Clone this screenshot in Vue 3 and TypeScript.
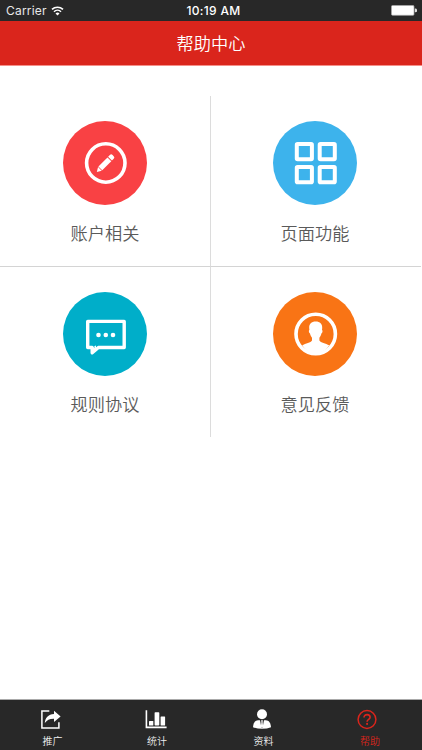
<script setup lang="ts">
interface Entry {
  id: string
  label: string
}

const topics: Entry[] = [
  { id: 'account', label: '账户相关' },
  { id: 'features', label: '页面功能' },
  { id: 'rules', label: '规则协议' },
  { id: 'feedback', label: '意见反馈' },
]

const tabs: Entry[] = [
  { id: 'promote', label: '推广' },
  { id: 'stats', label: '统计' },
  { id: 'profile', label: '资料' },
  { id: 'help', label: '帮助' },
]

const activeTab = 'help'
</script>

<template>
  <div class="screen">
    <div class="status">
      <div class="carrier">
        <span>Carrier</span>
        <svg class="wifi" width="13" height="10" viewBox="0 0 13 10">
          <path d="M1 3.4a8 8 0 0 1 11 0M3 5.7a5 5 0 0 1 7 0" fill="none" stroke="#fff" stroke-width="1.6" />
          <path d="M4.5 7.4a3 3 0 0 1 4 0L6.5 9.6z" fill="#fff" />
        </svg>
      </div>
      <div class="time">10:19 AM</div>
      <div class="power">
        <svg width="26" height="11" viewBox="0 0 26 11">
          <rect x="0.5" y="0.5" width="22.5" height="9.8" rx="1" fill="#fff" stroke="#aaa" stroke-width="0.7" />
          <path d="M23.8 3.6h.6a1.2 1.2 0 0 1 0 3.6h-.6z" fill="#ddd" />
        </svg>
      </div>
    </div>
    <header class="header">帮助中心</header>

    <main class="grid">
      <div v-for="topic in topics" :key="topic.id" class="cell">
        <div class="disc" :class="topic.id">
          <svg v-if="topic.id === 'account'" width="84" height="84" viewBox="0 0 84 84">
            <circle cx="42.8" cy="42" r="19.2" fill="none" stroke="#fff" stroke-width="3.6" />
            <g transform="translate(33.8 50.9) rotate(-45)" fill="#fff">
              <path d="M0 0L4.4-2.6V2.6z" />
              <path d="M5-2.7H17.8V2.7H5z" />
              <path d="M18.7-2.7H21.2Q23.1-2.7 23.1-.8V.8Q23.1 2.7 21.2 2.7H18.7z" />
            </g>
          </svg>
          <svg v-else-if="topic.id === 'features'" width="84" height="84" viewBox="0 0 84 84">
            <g fill="none" stroke="#fff" stroke-width="4">
              <rect x="23.8" y="23.1" width="15.1" height="15.2" rx="0.8" />
              <rect x="46.7" y="23.1" width="15.1" height="15.2" rx="0.8" />
              <rect x="23.8" y="46" width="15.1" height="15.2" rx="0.8" />
              <rect x="46.7" y="46" width="15.1" height="15.2" rx="0.8" />
            </g>
          </svg>
          <svg v-else-if="topic.id === 'rules'" width="84" height="84" viewBox="0 0 84 84">
            <path
              d="M24.7 29.4H61.2V55.5H35.4L29.2 60.8V55.5H24.7z"
              fill="none" stroke="#fff" stroke-width="3.4" stroke-linejoin="round"
            />
            <path d="M29 55V61L33 56.5V53.5z" fill="#fff" />
            <path d="M30.6 53.8L31.4 55.6" stroke="#00aec9" stroke-width="0.8" />
            <g fill="#fff">
              <circle cx="35.5" cy="43" r="2.3" />
              <circle cx="42.8" cy="43" r="2.3" />
              <circle cx="50" cy="43" r="2.3" />
            </g>
          </svg>
          <svg v-else width="84" height="84" viewBox="0 0 84 84">
            <circle cx="42.7" cy="42" r="19.7" fill="none" stroke="#fff" stroke-width="3.6" />
            <path
              d="M42.7 29.6c4.3 0 6.7 2.7 6.5 6.3l-.2 2.1c.9.4.6 2.8-.6 3.6-.4 1.8-1 3.1-2 4.1v2.8c1.2 2.2 6.4 3 9.8 4.8C53 58.3 48.5 61 42.7 61s-10.3-2.7-13.5-7.7c3.4-1.8 8.6-2.6 9.8-4.8v-2.8c-1-1-1.6-2.3-2-4.1-1.2-.8-1.5-3.2-.6-3.6l-.2-2.1c-.2-3.6 2.2-6.3 6.5-6.3z"
              fill="#fff"
            />
          </svg>
        </div>
        <span class="label">{{ topic.label }}</span>
      </div>
    </main>

    <nav class="tabs">
      <div v-for="tab in tabs" :key="tab.id" class="tab" :class="[tab.id, { active: tab.id === activeTab }]">
        <svg v-if="tab.id === 'promote'" width="22" height="22" viewBox="0 0 22 22">
          <path d="M9.3 2.1H1.9V19H18.9V13.2" fill="none" stroke="#fff" stroke-width="1.5" />
          <path d="M14 1.8L20.6 7.5L14 13V9.7C9.5 9.6 7 11 4.8 14.1C5.1 9 8.2 5.5 14 5.1z" fill="#fff" />
        </svg>
        <svg v-else-if="tab.id === 'stats'" width="22" height="22" viewBox="0 0 22 22">
          <path d="M1.4 1.2V18.4H21.6" fill="none" stroke="#fff" stroke-width="1.6" />
          <g fill="#fff">
            <rect x="4" y="12" width="4.3" height="4.5" rx=".5" />
            <rect x="9.6" y="3.3" width="4.7" height="13.2" rx=".7" />
            <rect x="15.6" y="7.5" width="4.5" height="9" rx=".5" />
          </g>
        </svg>
        <svg v-else-if="tab.id === 'profile'" width="22" height="22" viewBox="0 0 22 22">
          <circle cx="11" cy="5.2" r="5" fill="#fff" />
          <path d="M7.2 11.2C4 11.2 2.3 14 2 18.2Q5.9 19.8 11 19.8T20 18.2C19.7 14 18 11.2 14.8 11.2z" fill="#fff" />
          <path d="M9 11L10.5 18.8H11.5L13 11z" fill="#282828" />
          <path d="M10.1 11.3H11.9L11.6 13L12.1 17.4L11 19.2L9.9 17.4L10.4 13z" fill="#fff" />
        </svg>
        <svg v-else width="22" height="22" viewBox="0 0 22 22">
          <circle cx="11" cy="10.5" r="8.9" fill="none" stroke="currentColor" stroke-width="1.5" />
          <path
            d="M8 8.5C8 6.6 9.3 5.6 11.1 5.6S14.1 6.8 14.1 8.3C14.1 10.4 11.1 10.5 11.1 12.7"
            fill="none" stroke="currentColor" stroke-width="1.6"
          />
          <circle cx="11.1" cy="14.9" r="1.05" fill="currentColor" />
        </svg>
        <span>{{ tab.label }}</span>
      </div>
    </nav>
  </div>
</template>

<style>
body {
  margin: 0;
  background: #fff;
}
</style>

<style scoped>
.screen {
  display: flex;
  flex-direction: column;
  width: 422px;
  height: 750px;
  overflow: hidden;
  background: #fff;
  font-family: "Noto Sans CJK SC", sans-serif;
}

.status {
  display: grid;
  grid-template-columns: 1fr auto 1fr;
  align-items: center;
  box-sizing: border-box;
  height: 21px;
  padding: 0 5px 0 6px;
  background: #282828;
  color: #fff;
  font-family: Inter, sans-serif;
  font-size: 12px;
  line-height: 21px;
}

.carrier {
  display: flex;
  align-items: center;
  gap: 4px;
  color: #e8e8e8;
  letter-spacing: 0.2px;
}

.time {
  padding-left: 4px;
  font-weight: 500;
  letter-spacing: 0.3px;
}

.power {
  display: flex;
  justify-content: flex-end;
}

.header {
  height: 44px;
  border-bottom: 1px solid #f58f89;
  margin-bottom: 30px;
  background: #da251c;
  color: #fff;
  font-size: 17.2px;
  font-weight: 350;
  line-height: 44px;
  text-align: center;
}

.grid {
  display: grid;
  grid-template-columns: 211px 210px;
  grid-template-rows: 171px 170px;
}

.cell {
  display: flex;
  flex-direction: column;
  align-items: center;
  box-sizing: border-box;
  padding-top: 25px;
}

.cell:nth-child(odd) {
  border-right: 1px solid #dcdcdc;
}

.cell:nth-child(even) {
  padding-right: 2px;
}

.cell:nth-child(-n + 2) {
  border-bottom: 1px solid #d4d4d4;
}

.disc {
  width: 84px;
  height: 84px;
  border-radius: 50%;
}

.disc svg {
  display: block;
}

.account {
  background: #f94144;
}

.features {
  background: #3db3ec;
}

.rules {
  background: #00aec9;
}

.feedback {
  background: #f97415;
}

.label {
  margin-top: 16px;
  color: #5a5a5a;
  font-size: 17.2px;
  font-weight: 350;
  line-height: 24px;
}

.tabs {
  display: grid;
  grid-template-columns: 105px 104px 109px 104px;
  box-sizing: border-box;
  height: 51px;
  margin-top: auto;
  border-top: 1px solid #aaa;
  background: #282828;
  color: #eee;
}

.tab {
  display: flex;
  flex-direction: column;
  align-items: center;
  padding-top: 9px;
  font-size: 10px;
  font-weight: 350;
  line-height: 15px;
}

.tab svg {
  display: block;
  margin: 0 3px 2px 0;
}

.tab.active {
  color: #da251c;
}

.tab.active svg {
  margin-right: 6px;
}
</style>
